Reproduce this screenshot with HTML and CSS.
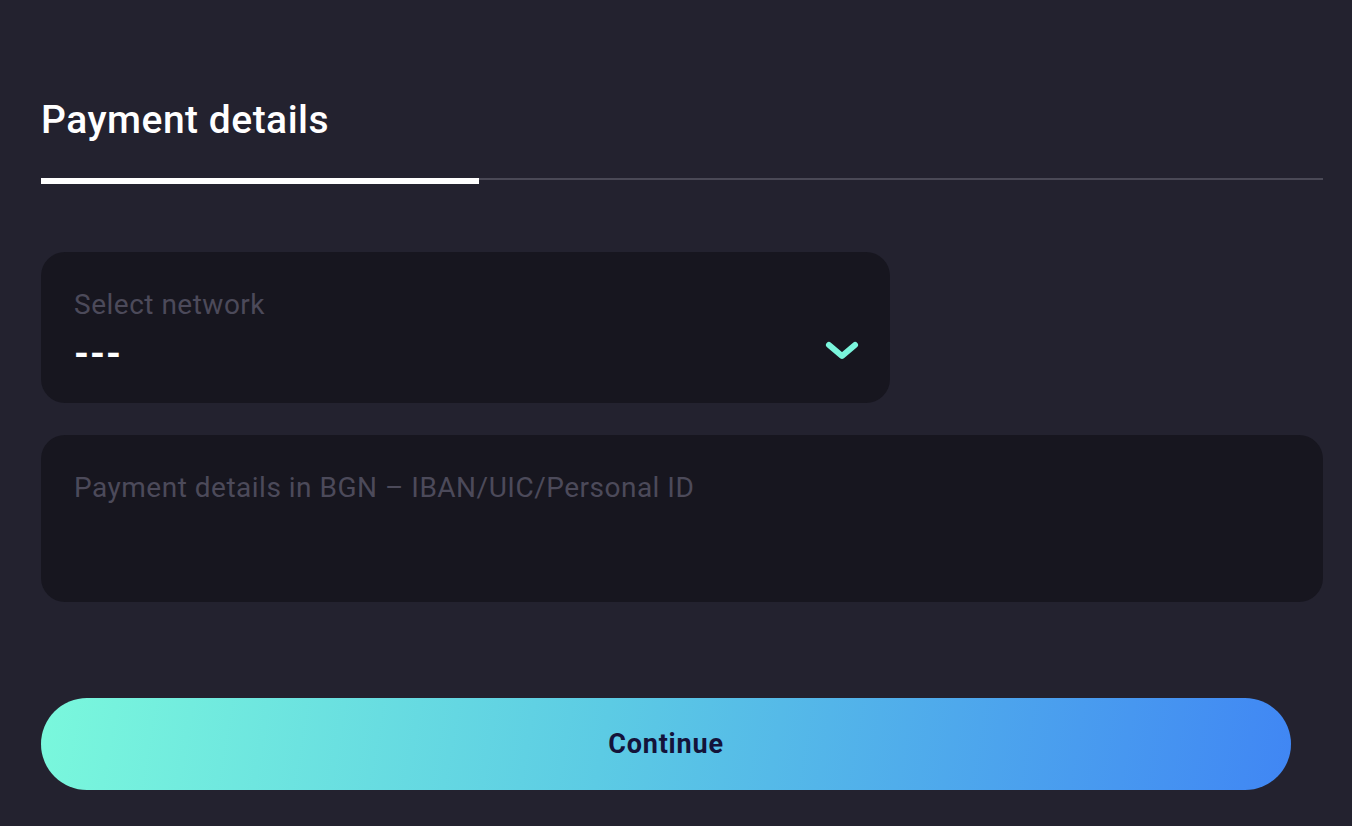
FILE: index.html
```html
<!DOCTYPE html>
<html lang="en">
  <head>
    <meta charset="UTF-8" />
    <meta name="viewport" content="width=device-width, initial-scale=1.0" />
    <title>Payment details</title>
    <link rel="stylesheet" href="styles.css">
  </head>
  <body>
    <div id="wrapper">
      <h1 class="title">Payment details</h1>

      <div class="progress">
        <div class="progressFill"></div>
      </div>

      <form class="form">
        <div class="selectBox">
          <div class="selectText">
            <span class="fieldLabel">Select network</span>
            <span class="selectValue">---</span>
          </div>
          <svg class="chevron" width="36" height="22" viewBox="0 0 36 22">
            <path d="M5 5 L18 16 L31 5" fill="none" stroke="#7af5dc" stroke-width="6" stroke-linecap="round" stroke-linejoin="round" />
          </svg>
        </div>

        <textarea class="details" placeholder="Payment details in BGN – IBAN/UIC/Personal ID"></textarea>

        <button type="submit" class="continue">Continue</button>
      </form>
    </div>
  </body>
</html>
```
FILE: styles.css
```css
html {
  font-family: Roboto, "Noto Sans", sans-serif;
}

body {
  margin: 0;
  background-color: #23222f;
  color: #fff;
}

#wrapper {
  padding: 97px 29px 0 41px;
}

.title {
  margin: 0;
  font-size: 39px;
  font-weight: 500;
  line-height: 46px;
  letter-spacing: 0.5px;
}

.progress {
  margin-top: 35px;
  height: 6px;
  position: relative;
}

.progress::before {
  content: "";
  display: block;
  height: 2px;
  background-color: #4a4956;
}

.progressFill {
  position: absolute;
  left: 0;
  top: 0;
  width: 438px;
  height: 6px;
  background-color: #fff;
}

.form {
  margin-top: 68px;
  display: flex;
  flex-direction: column;
}

.selectBox {
  box-sizing: border-box;
  width: 849px;
  height: 151px;
  border-radius: 24px;
  background-color: #17161f;
  padding: 38px 30px 0 33px;
  display: flex;
  justify-content: space-between;
  align-items: flex-start;
}

.selectText {
  display: flex;
  flex-direction: column;
}

.fieldLabel {
  font-size: 28px;
  line-height: 30px;
  letter-spacing: 0.5px;
  color: #4c4a5a;
}

.selectValue {
  font-size: 38px;
  font-weight: 700;
  line-height: 44px;
  letter-spacing: 1px;
  margin-top: 12px;
}

.chevron {
  margin-top: 50px;
}

.details {
  box-sizing: border-box;
  margin-top: 32px;
  height: 167px;
  border: none;
  border-radius: 24px;
  background-color: #17161f;
  padding: 36px 33px;
  font-family: inherit;
  font-size: 28px;
  line-height: 34px;
  letter-spacing: 0.5px;
  color: #fff;
  resize: none;
  outline: none;
}

.details::placeholder {
  color: #4c4a5a;
}

.continue {
  margin-top: 96px;
  width: 1250px;
  height: 92px;
  border: none;
  border-radius: 46px;
  background: linear-gradient(100deg, #7af8dc 0%, #5ccbe4 45%, #4086f4 100%);
  color: #14133a;
  font-family: inherit;
  font-size: 27px;
  font-weight: 700;
  letter-spacing: 0.8px;
  cursor: pointer;
}
```
